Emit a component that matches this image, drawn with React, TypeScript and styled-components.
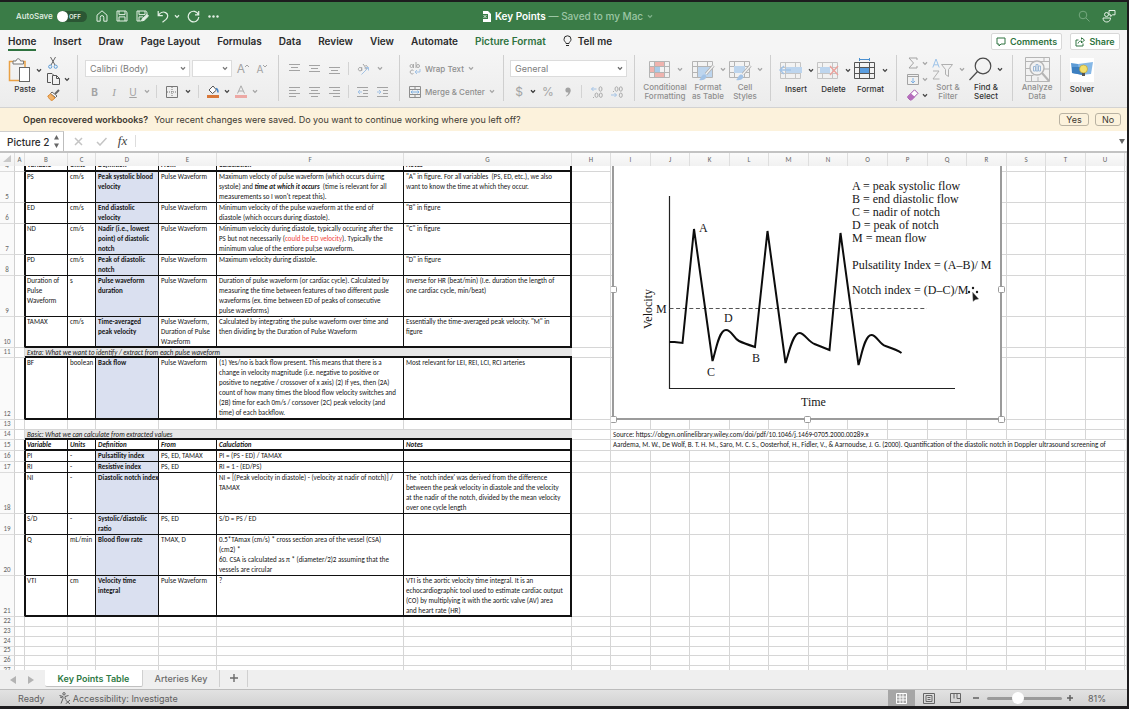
import React from "react";
import styled, { createGlobalStyle, css } from "styled-components";

const GlobalStyle = createGlobalStyle`
  * { box-sizing: border-box; }
  html, body { margin: 0; padding: 0; background: #1b1b1b; }
  button, input, select { font: inherit; color: inherit; margin: 0; padding: 0; border: 0; background: none; }
`;

const ui = `Inter, "Liberation Sans", sans-serif`;
const cellFont = `Carlito, Roboto, "Liberation Sans", sans-serif`;

const Window = styled.div`
  display: flex;
  flex-direction: column;
  height: 100vh;
  padding: 2px 2px 3px 0;
  background: #1d1c1e;
  font-family: ${ui};
  color: #2b2b2b;
  overflow: hidden;
`;

/* ---------- title bar ---------- */
const TitleBar = styled.header`
  display: grid;
  grid-template-columns: 1fr auto 1fr;
  align-items: center;
  flex: none;
  height: 28px;
  padding: 0 8px 0 16px;
  background: #3a7c47;
  color: #e3f0e5;
`;
const QuickAccess = styled.div`
  display: flex;
  align-items: center;
`;
const AutoSave = styled.label`
  display: flex;
  align-items: center;
  justify-content: space-between;
  width: 71px;
  margin-right: 4px;
  font-size: 8px;
  font-weight: 500;
  white-space: nowrap;
`;
const Toggle = styled.span`
  display: flex;
  align-items: center;
  position: relative;
  width: 30px;
  height: 11px;
  padding-left: 12px;
  border-radius: 6px;
  background: #2b5634;
  font-size: 6px;
  font-weight: 600;
  &::before {
    content: "";
    position: absolute;
    left: 0;
    top: 0;
    width: 11px;
    height: 11px;
    border-radius: 50%;
    background: #fff;
  }
  input { position: absolute; inset: 0; opacity: 0; }
`;
const IconButton = styled.button<{ $w?: number; $c?: string }>`
  display: flex;
  align-items: center;
  justify-content: center;
  flex: none;
  width: ${(p) => p.$w ?? 20}px;
  height: 16px;
  color: ${(p) => p.$c ?? "inherit"};
`;
const DocTitle = styled.div`
  display: flex;
  align-items: center;
  gap: 4px;
  font-size: 10px;
  color: #9cc6a4;
  font-weight: 500;
  white-space: nowrap;
  strong { color: #fff; font-weight: 600; }
`;
const TitleRight = styled.div`
  display: flex;
  justify-content: flex-end;
  gap: 5px;
`;

/* ---------- tabs ---------- */
const TabRow = styled.nav`
  display: flex;
  align-items: center;
  flex: none;
  height: 23px;
  padding: 0 7px 0 8px;
  background: #f5f5f5;
`;
const Tabs = styled.div`
  display: flex;
  gap: 17px;
  flex: 1;
`;
const Tab = styled.button<{ $active?: boolean; $green?: boolean }>`
  display: flex;
  align-items: center;
  gap: 6px;
  height: 19px;
  font-size: 10px;
  font-weight: 600;
  white-space: nowrap;
  color: ${(p) => (p.$green ? "#2f7340" : "#2b2b2b")};
  && { border-bottom: 2px solid ${(p) => (p.$active ? "#2f7340" : "transparent")}; }
`;
const Pill = styled.button<{ $w: number }>`
  display: flex;
  align-items: center;
  justify-content: center;
  gap: 4px;
  width: ${(p) => p.$w}px;
  height: 17px;
  margin-left: 8px;
  border: 1px solid #d8d8d8;
  border-radius: 2px;
  background: #fff;
  color: #2f7340;
  font-size: 9px;
  font-weight: 600;
`;

/* ---------- ribbon ---------- */
const Ribbon = styled.section`
  display: flex;
  flex: none;
  height: 55px;
  padding: 2px 0 6px;
  background: linear-gradient(#f5f5f5, #ececec);
  border-bottom: 1px solid #d2d2d2;
  color: #a3a3a3;
`;
const Group = styled.div<{ $w?: number; $l?: number }>`
  display: flex;
  flex: none;
  width: ${(p) => (p.$w ? p.$w + "px" : "auto")};
  padding-left: ${(p) => p.$l ?? 0}px;
  border-right: 1px solid #cfcfcf;
  &:last-child { border-right: 0; }
`;
const Stack = styled.div<{ $tight?: boolean }>`
  display: flex;
  flex-direction: column;
  gap: ${(p) => (p.$tight ? 0 : 6)}px;
  padding-top: ${(p) => (p.$tight ? 0 : 5)}px;
`;
const Line = styled.div`
  display: flex;
  align-items: center;
  height: 17px;
`;
const Sep = styled.span<{ $m: number }>`
  flex: none;
  width: 1px;
  height: 13px;
  margin: 0 ${(p) => p.$m}px;
  background: #d3d3d3;
`;
const BigButton = styled.button<{ $w: number; $on?: boolean }>`
  display: flex;
  flex-direction: column;
  align-items: center;
  flex: none;
  width: ${(p) => p.$w}px;
  color: ${(p) => (p.$on ? "#333" : "#8e8e8e")};
  font-size: 8px;
  font-weight: 500;
  line-height: 9px;
  white-space: pre;
`;
const BigIcon = styled.span`
  display: flex;
  align-items: center;
  gap: 5px;
  height: 30px;
`;
const TextButton = styled.button`
  display: flex;
  align-items: center;
  gap: 4px;
  font-size: 8px;
  font-weight: 500;
  color: #8e8e8e;
  white-space: nowrap;
`;
const SelectBox = styled.label<{ $w: number }>`
  display: flex;
  align-items: center;
  position: relative;
  width: ${(p) => p.$w}px;
  height: 17px;
  margin-right: 2px;
  border: 1px solid #dcdcdc;
  background: #fff;
  color: #7d7d7d;
  font-size: 9px;
  select { appearance: none; width: 100%; height: 100%; padding-left: 4px; outline: 0; }
  svg { position: absolute; right: 3px; }
`;
const Glyph = styled.span<{ $italic?: boolean; $under?: boolean; $size?: number; $bold?: boolean }>`
  font-size: ${(p) => p.$size ?? 11}px;
  font-weight: ${(p) => (p.$bold ? 700 : 400)};
  font-style: ${(p) => (p.$italic ? "italic" : "normal")};
  font-family: ${(p) => (p.$italic ? `"Liberation Serif", serif` : ui)};
  text-decoration: ${(p) => (p.$under ? "underline" : "none")};
`;

/* ---------- message and formula bars ---------- */
const Message = styled.section`
  display: flex;
  align-items: center;
  flex: none;
  gap: 6px;
  height: 23px;
  padding: 0 6px 0 23px;
  background: #fcf2dc;
  font-size: 9px;
  color: #3c3931;
  white-space: nowrap;
  strong { font-weight: 600; }
  p { margin: 0; flex: 1; }
`;
const Answer = styled.button<{ $w: number }>`
  width: ${(p) => p.$w}px;
  height: 13px;
  border: 1px solid #b9b2a2;
  border-radius: 3px;
  font-size: 9px;
  line-height: 11px;
`;
const FormulaBar = styled.div`
  display: flex;
  align-items: center;
  flex: none;
  height: 22px;
  background: #fff;
  border-bottom: 2px solid #c3c3c3;
`;
const NameBox = styled.div`
  display: flex;
  align-items: center;
  width: 64px;
  height: 20px;
  padding-left: 7px;
  border-right: 1px solid #bdbdbd;
  border-top: 1px solid #cfcfcf;
  color: #2b2b2b;
  input { flex: 1; min-width: 0; font-size: 10px; font-weight: 500; outline: 0; }
  svg { margin-right: 3px; }
`;
const FormulaInput = styled.input`
  flex: 1;
  min-width: 0;
  height: 12px;
  && { border-left: 1px solid #ddd; }
  outline: 0;
`;

/* ---------- sheet ---------- */
const SheetArea = styled.main`
  flex: 1;
  min-height: 0;
  overflow: hidden;
  background: #fff;
`;
const Grid = styled.table`
  table-layout: fixed;
  width: 100%;
  min-width: 1127px;
  border-collapse: separate;
  border-spacing: 0;
  font-family: ${cellFont};
  font-size: 7px;
  line-height: 10px;
  color: #161616;
  td, th { padding: 0; vertical-align: top; font-weight: 400; text-align: left; }
`;
const Col = styled.col<{ $w?: number }>`
  width: ${(p) => (p.$w ? p.$w + "px" : "auto")};
`;
const ColHead = styled.th`
  position: sticky;
  top: 0;
  z-index: 3;
  height: 13px;
  background: linear-gradient(#fbfbfb, #f1f1f1);
  border-right: 1px solid #dedede;
  color: #666;
  line-height: 13px;
  && { text-align: center; }
`;
const RowHead = styled.th<{ $h: number }>`
  height: ${(p) => p.$h}px;
  background: #fafafa;
  border-right: 1px solid #d0d0d0;
  border-bottom: 1px solid #dcdcdc;
  color: #666;
  && { vertical-align: bottom; text-align: center; }
`;
const ink = "#111";
const Cell = styled.td<{ $kind?: string; $thick?: boolean; $first?: boolean; $last?: boolean }>`
  border-right: 1px solid #d6d6d6;
  border-bottom: 1px solid #d6d6d6;
  ${(p) =>
    p.$kind &&
    css`
      border-right: ${p.$last ? 2 : 1}px solid ${ink};
      border-bottom: ${p.$thick ? 2 : 1}px solid ${ink};
      border-left: ${p.$first ? 1 : 0}px solid ${ink};
    `}
  ${(p) => p.$kind === "fill" && css`background: #dae0f0;`}
`;
const Edge = styled.td<{ $dark?: boolean }>`
  border-right: 1px solid ${(p) => (p.$dark ? ink : "#d6d6d6")};
  border-bottom: 1px solid #d6d6d6;
`;
const Band = styled.td`
  background: #e6e6e6;
  border-bottom: 2px solid ${ink};
`;
const Anchor = styled.td`
  position: relative;
`;
const Content = styled.div<{ $h: number; $bold?: boolean; $italic?: boolean; $end?: boolean; $pad?: number }>`
  display: flex;
  flex-direction: column;
  justify-content: ${(p) => (p.$end ? "flex-end" : "flex-start")};
  height: ${(p) => p.$h - 2}px;
  padding-left: ${(p) => p.$pad ?? 2}px;
  white-space: pre;
  font-weight: ${(p) => (p.$bold ? 700 : 400)};
  font-style: ${(p) => (p.$italic ? "italic" : "normal")};
`;
const Red = styled.span`
  color: #f0423a;
`;
const Picture = styled.figure`
  position: absolute;
  left: 0;
  top: 0;
  z-index: 2;
  margin: 0;
  line-height: 0;
`;

/* ---------- bottom bars ---------- */
const SheetTabs = styled.nav`
  display: flex;
  flex: none;
  height: 20px;
  background: #efefef;
  border-bottom: 1px solid #bcbcbc;
`;
const SheetNav = styled.div`
  display: flex;
  align-items: center;
  gap: 12px;
  width: 45px;
  padding-left: 10px;
`;
const SheetTab = styled.button<{ $w: number; $active?: boolean }>`
  width: ${(p) => p.$w}px;
  height: 17px;
  font-size: 9px;
  font-weight: ${(p) => (p.$active ? 600 : 500)};
  color: ${(p) => (p.$active ? "#2f7a45" : "#6b6b6b")};
  && {
    background: ${(p) => (p.$active ? "#fff" : "none")};
    border-right: 1px solid #d0d0d0;
  }
  ${(p) => p.$active && css`&& { border-bottom: 1px solid #c0c0c0; border-radius: 0 0 2px 2px; }`}
`;
const StatusBar = styled.footer`
  display: flex;
  align-items: center;
  flex: none;
  height: 16px;
  background: linear-gradient(#e2e2e2, #d2d2d2);
  padding: 0 21px 0 18px;
  font-size: 9px;
  color: #606060;
  white-space: nowrap;
`;
const StatusText = styled.span`
  display: flex;
  align-items: center;
  gap: 2px;
  margin-right: 14px;
`;
const Spacer = styled.span`
  flex: 1;
`;
const ViewButton = styled.button<{ $active?: boolean }>`
  display: flex;
  align-items: center;
  justify-content: center;
  width: 27px;
  height: 16px;
  && { background: ${(p) => (p.$active ? "#a6a6a6" : "none")}; }
  color: ${(p) => (p.$active ? "#fff" : "#666")};
`;
const ZoomSlider = styled.input`
  appearance: none;
  width: 75px;
  height: 12px;
  margin: 0 4px;
  &::-webkit-slider-runnable-track { height: 3px; border-radius: 2px; background: #9a9a9a; }
  &::-webkit-slider-thumb {
    appearance: none;
    width: 12px;
    height: 12px;
    margin-top: -5px;
    border-radius: 50%;
    background: #fff;
  }
`;
const Percent = styled.output`
  width: 32px;
  text-align: right;
`;

/* ---------- icons ---------- */
const Svg = ({ w = 14, h = 14, sw = 1, children }: { w?: number; h?: number; sw?: number; children: React.ReactNode }) => (
  <svg width={w} height={h} viewBox={`0 0 ${w} ${h}`} fill="none" stroke="currentColor" strokeWidth={sw} aria-hidden="true">
    {children}
  </svg>
);
const Chevron = ({ c = "#a5a5a5" }: { c?: string }) => (
  <svg width="6" height="5" viewBox="0 0 6 5" fill="none" stroke={c} strokeWidth="1.3" aria-hidden="true">
    <path d="M1 1.3 3 3.4 5 1.3" />
  </svg>
);
const BLUE = "#a3c3e6";
const HomeIcon = () => (<Svg w={12} h={12}><path d="M1 5.2 6 .8l5 4.4v6H7.8V7.4a1.8 1.8 0 0 0-3.6 0v3.8H1z" /></Svg>);
const SaveIcon = () => (<Svg w={12} h={12}><path d="M1 1h8.7L11 2.300V11H1zM3 1v3.600h6V1M3 11V6.900h6V11" /></Svg>);
const SavePenIcon = () => (<Svg w={13} h={12}><path d="M5 11H1V1h8.700L11 2.300V5M3 1v3.600h6V1M3 11V6.900h4" /><path d="m5.500 11 .8-2.300L11 4.500l1.500 1.500L8 10.400z" fill="currentColor" /></Svg>);
const UndoIcon = () => (<Svg w={12} h={13} sw={1.2}><path d="M1.200 1v4.600h4.600M1.500 5.300C3 2.700 6 1.300 8.600 2.600c3 1.600 2.600 4.800.4 6.800L5.500 12.300" /></Svg>);
const RedoIcon = () => (<Svg w={13} h={13} sw={1.2}><path d="M11.700 1v3.800H8M11.400 4.500A5.300 5.300 0 1 0 11.800 7" /></Svg>);
const AlignIcon = ({ rows }: { rows: number[][] }) => (
  <Svg w={12} h={12}>{rows.map(([x1, x2, y]) => (<path key={y} d={`M${x1} ${y}H${x2}`} />))}</Svg>
);
const TableIcon = ({ children, c = "#b4b4b4" }: { children?: React.ReactNode; c?: string }) => (
  <svg width="24" height="24" viewBox="0 0 24 24" fill="none" stroke={c} aria-hidden="true">
    <path d="M1.500 4.500h20v16h-20zM1.500 9.500h20M1.500 15.500h20M6.500 4.500v16M16.500 4.500v16" />
    {children}
  </svg>
);
const Brush = () => (<><path d="M22.500 8.500 15 17" stroke="#b0b0b0" strokeWidth="3" /><path d="M22.500 8.500 15 17" stroke="#f5f5f5" strokeWidth="1.200" /><path d="M8 23c2-1 2-5 5-5.500 2 0 3 2 2 3.500-1.500 2-4 2.500-7 2z" fill={BLUE} stroke="none" /></>);

/* ---------- waveform picture ---------- */
const WAVE = "M57.500 176h5l8 1L82 63l18.500 132c3-8 6-31 13.500-31 6 0 7 8 13 11 4 2 10 4 16 6l12.500-116 18 132c3-8 7-30 14-30 5 0 9 9 15 11l15 6L228.500 67l18 132c3-9 6-30 13-30 5 0 8 9 14 11 6 2 12 4 16 7";
const Waveform = () => (
  <svg width="394" height="258" viewBox="0 0 394 258" role="img" aria-label="Doppler pulse waveform">
    <rect x="2" y="-4" width="388" height="257" fill="#fff" stroke="#9b9b9b" strokeWidth="2" />
    <g transform="translate(1 0)">
      <path d="M57.500 30v192.500H343" fill="none" stroke="#222" strokeWidth="1.200" />
      <path d="M57.500 142.500H315" fill="none" stroke="#555" strokeDasharray="4 2.600" />
      <path d={WAVE} fill="none" stroke="#0c0c0c" strokeWidth="2" strokeLinejoin="miter" strokeMiterlimit="2" />
      <g fontFamily='"Liberation Serif", serif' fontSize="12" fill="#161616">
        <text x="44" y="147">M</text>
        <text x="87" y="66">A</text>
        <text x="112" y="156">D</text>
        <text x="95" y="210">C</text>
        <text x="140" y="196">B</text>
        <text x="189" y="240">Time</text>
        <text transform="translate(40 163) rotate(-90)">Velocity</text>
        <text x="240" y="24">A = peak systolic flow</text>
        <text x="240" y="37">B = end diastolic flow</text>
        <text x="240" y="50">C = nadir of notch</text>
        <text x="240" y="63">D = peak of notch</text>
        <text x="240" y="76">M = mean flow</text>
        <text x="240" y="103">Pulsatility Index = (A–B)/ M</text>
        <text x="240" y="128">Notch index = (D–C)/M</text>
      </g>
      <g fill="#1b1b1b">
        <circle cx="357" cy="126" r="1.200" /><circle cx="361" cy="122" r="1.200" /><circle cx="365" cy="126" r="1.200" />
        <path d="m360.500 126 .5 9.500 2.300-1.800 3.500-.7z" stroke="#999" strokeWidth=".4" />
      </g>
    </g>
    <g fill="#fff" stroke="#9b9b9b">
      {[[2, 123], [390, 123], [2, 253], [196, 253], [390, 253]].map(([x, y]) => (
        <rect key={`${x}-${y}`} x={x - 2.5} y={y - 2.5} width="6" height="6" rx="1" />
      ))}
    </g>
  </svg>
);

/* ---------- sheet data ---------- */
type Row = { n: number; h: number; cells?: React.ReactNode[]; head?: boolean; band?: string; thick?: boolean };
const rows: Row[] = [
  { n: 4, h: 6, head: true, thick: true, cells: ["Variable", "Units", "Definition", "From", "Caluclation", "Notes"] },
  { n: 5, h: 31, cells: ["PS", "cm/s", "Peak systolic blood\nvelocity", "Pulse Waveform", <>Maximum velocty of pulse waveform (which occurs duirng{"\n"}systole) and <b><i>time at which it occurs</i></b>{"  (time is relevant for all\nmeasurements so I won't repeat this)."}</>, "\"A\" in figure. For all variables  (PS, ED, etc.), we also\nwant to know the time at which they occur."] },
  { n: 6, h: 21, cells: ["ED", "cm/s", "End diastolic\nvelocity", "Pulse Waveform", "Minimum velocity of the pulse waveform at the end of\ndiastole (which occurs during diastole).", "\"B\" in figure"] },
  { n: 7, h: 31, cells: ["ND", "cm/s", "Nadir (i.e., lowest\npoint) of diastolic\nnotch", "Pulse Waveform", <>{"Minimum velocity during diastole, typically occuring after the\nPS but not necessarily ("}<Red>could be ED velocity</Red>{"). Typically the\nminimum value of the entiore pul;se waveform."}</>, "\"C\" in figure"] },
  { n: 8, h: 21, cells: ["PD", "cm/s", "Peak of diastolic\nnotch", "Pulse Waveform", "Maximum velocity during diastole.", "\"D\" in figure"] },
  { n: 9, h: 41, cells: ["Duration of\nPulse\nWaveform", "s", "Pulse waveform\nduration", "Pulse Waveform", "Duration of pulse waveform (or cardiac cycle). Calculated by\nmeasuring the time between features of two different pusle\nwaveforms (ex. time between ED of peaks of consecutive\npulse waveforms)", "Inverse for HR (beat/min) (I.e. duration the length of\none cardiac cycle, min/beat)"] },
  { n: 10, h: 31, thick: true, cells: ["TAMAX", "cm/s", "Time-averaged\npeak velocity", "Pulse Waveform,\nDuration of Pulse\nWaveform", "Calculated by integrating the pulse waveform over time and\nthen dividing by the Duration of Pulse Waveform", "Essentially the time-averaged peak velocity. \"M\" in\nfigure"] },
  { n: 11, h: 10, band: "Extra: What we want to identify / extract from each pulse waveform" },
  { n: 12, h: 62, thick: true, cells: ["BF", "boolean", "Back flow", "Pulse Waveform", "(1) Yes/no is back flow present. This means that there is a\nchange in velocity magnitude (i.e. negative to positive or\npositive to negative / crossover of x axis) (2) If yes, then (2A)\ncount of how many times the blood flow velocity switches and\n(2B) time for each 0m/s / corssover (2C) peak velocity (and\ntime) of each backflow.", "Most relevant for LEI, REI, LCI, RCI arteries"] },
  { n: 13, h: 10 },
  { n: 14, h: 10, band: "Basic: What we can calculate from extracted values" },
  { n: 15, h: 11, head: true, thick: true, cells: ["Variable", "Units", "Definition", "From", "Caluclation", "Notes"] },
  { n: 16, h: 11, cells: ["PI", "-", "Pulsatility index", "PS, ED, TAMAX", "PI = (PS - ED) / TAMAX", ""] },
  { n: 17, h: 11, cells: ["RI", "-", "Resistive index", "PS, ED", "RI = 1 - (ED/PS)", ""] },
  { n: 18, h: 41, cells: ["NI", "-", "Diastolic notch index", "", "NI = [(Peak velocity in diastole) - (velocity at nadir of notch)] /\nTAMAX", "The `notch index' was derived from the difference\nbetween the peak velocity in diastole and the velocity\nat the nadir of the notch, divided by the mean velocity\nover one cycle length"] },
  { n: 19, h: 21, cells: ["S/D", "-", "Systolic/diastolic\nratio", "PS, ED", "S/D = PS / ED", ""] },
  { n: 20, h: 41, cells: ["Q", "mL/min", "Blood flow rate", "TMAX, D", "0.5*TAmax (cm/s) * cross section area of the vessel (CSA)\n(cm2) *\n60. CSA is calculated as π * (diameter/2)2 assuming that the\nvessels are circular", ""] },
  { n: 21, h: 41, thick: true, cells: ["VTI", "cm", "Velocity time\nintegral", "Pulse Waveform", "?", "VTI is the aortic velocity time integral. It is an\nechocardiographic tool used to estimate cardiac output\n(CO) by multiplying it with the aortic valve (AV) area\nand heart rate (HR)"] },
  { n: 22, h: 10 }, { n: 23, h: 10 }, { n: 24, h: 10 }, { n: 25, h: 9 }, { n: 26, h: 10 }, { n: 27, h: 10 },
];
const COLS = [15, 10, 43, 28, 63, 58, 187, 168, 39, 40, 39, 40, 39, 40, 39, 40, 40, 39, 40, 39, 40, 39];
const LETTERS = "ABCDEFGHIJKLMNOPQRSTU".split("");
const SOURCE = "Source: https://obgyn.onlinelibrary.wiley.com/doi/pdf/10.1046/j.1469-0705.2000.00289.x";
const CITATION = "Aardema, M. W., De Wolf, B. T. H. M., Saro, M. C. S., Oosterhof, H., Fidler, V., & Aarnoudse, J. G. (2000). Quantification of the diastolic notch in Doppler ultrasound screening of";

const blanks = (from: number, count: number) => Array.from({ length: count }, (_, i) => <Cell key={`b${from + i}`} />);

const SheetRow = ({ r }: { r: Row }) => (
  <tr>
    <RowHead scope="row" $h={r.h}><Content $h={r.h} $end $pad={0}>{r.n}</Content></RowHead>
    <Edge $dark={!!r.cells} />
    {r.cells?.map((c, i) => (
      <Cell key={i} $kind={i === 2 && !r.head ? "fill" : "box"} $thick={r.thick} $first={i === 0} $last={i === 5}>
        <Content $h={r.h} $bold={r.head || i === 2} $italic={r.head} $end={r.n === 4} $pad={i === 0 ? 1 : 2}>
          <span>{c}</span>
        </Content>
      </Cell>
    ))}
    {r.band && <Band colSpan={6}><Content $h={r.h} $italic>{r.band}</Content></Band>}
    {!r.cells && !r.band && blanks(0, 6)}
    <Cell />
    {r.n === 4 && <><Anchor><Picture><Waveform /></Picture></Anchor>{blanks(7, 13)}</>}
    {r.n === 14 && <><Cell colSpan={7}><Content $h={r.h}>{SOURCE}</Content></Cell>{blanks(14, 7)}</>}
    {r.n === 15 && <Cell colSpan={14}><Content $h={r.h}>{CITATION}</Content></Cell>}
    {![4, 14, 15].includes(r.n) && blanks(7, 14)}
  </tr>
);

export default function App() {
  const dark = "#444";
  return (
    <Window>
      <GlobalStyle />
      <TitleBar>
        <QuickAccess>
          <AutoSave>AutoSave<Toggle><input type="checkbox" aria-label="AutoSave" />OFF</Toggle></AutoSave>
          <IconButton $w={21} aria-label="Home"><HomeIcon /></IconButton>
          <IconButton aria-label="Save"><SaveIcon /></IconButton>
          <IconButton $w={21} aria-label="Save as"><SavePenIcon /></IconButton>
          <IconButton $w={20} aria-label="Undo"><UndoIcon /></IconButton>
          <IconButton $w={8} aria-label="Undo list"><Chevron c="#e3f0e5" /></IconButton>
          <IconButton $w={24} aria-label="Repeat"><RedoIcon /></IconButton>
          <IconButton $w={16} aria-label="More">
            <svg width="11" height="3" viewBox="0 0 11 3" fill="currentColor"><circle cx="1.500" cy="1.500" r="1.200" /><circle cx="5.500" cy="1.500" r="1.200" /><circle cx="9.500" cy="1.500" r="1.200" /></svg>
          </IconButton>
        </QuickAccess>
        <DocTitle>
          <svg width="9" height="11" viewBox="0 0 9 11" aria-hidden="true"><path d="M1 0h5l3 3v8H1z" fill="#fff" /><rect y="3" width="6" height="5" fill="#3a7c47" /><path d="m1.500 4 3 3m0-3-3 3M6.500 5H8M6.500 7H8" stroke="#dcebdf" /></svg>
          <span><strong>Key Points</strong> — Saved to my Mac</span>
          <Chevron c="#7fb18a" />
        </DocTitle>
        <TitleRight>
          <IconButton aria-label="Search" $c="#75a87f"><Svg w={12} h={12}><circle cx="5" cy="5" r="3.800" /><path d="m8 8 3.500 3.500" /></Svg></IconButton>
          <IconButton aria-label="Collaborate"><Svg w={14} h={14}><circle cx="4.500" cy="5.500" r="2" /><path d="M1 9h7.500c0 2.500-1.500 4-3.700 4S1 11.500 1 9zM7 1.500h6v4.300h-2.500L8.700 7.500V5.800H7z" /></Svg></IconButton>
        </TitleRight>
      </TitleBar>

      <TabRow>
        <Tabs>
          {["Home", "Insert", "Draw", "Page Layout", "Formulas", "Data", "Review", "View", "Automate", "Picture Format"].map((t) => (
            <Tab key={t} $active={t === "Home"} $green={t === "Picture Format"}>{t}</Tab>
          ))}
          <Tab><Svg w={9} h={12}><path d="M3 8.500C3 7 1 6.500 1 4.300a3.500 3.500 0 0 1 7 0C8 6.500 6 7 6 8.500zM3 10.500h3" /></Svg>Tell me</Tab>
        </Tabs>
        <Pill $w={71}><Svg w={10} h={10}><path d="M1 1h8v6H5L3 9V7H1z" /></Svg>Comments</Pill>
        <Pill $w={50}><Svg w={10} h={10}><path d="M3.500 3H1v6h7V6.500M3 6.500C3.500 4.500 5 4 6.500 4V6L9.500 3 6.500.800v1.700" /></Svg>Share</Pill>
      </TabRow>

      <Ribbon>
        <Group $w={78} $l={8}>
          <BigButton $w={34} $on>
            <BigIcon>
              <svg width="23" height="25" viewBox="0 0 23 25" fill="none" aria-hidden="true"><path d="M6 3.500H1.500v19H11M14 3.500h3V9" stroke="#e9a145" strokeWidth="1.500" /><path d="M5 6V3h3c.5-3 4-3 4.500 0h3v3z" stroke="#777" fill="#fafafa" /><rect x="11.500" y="9.500" width="10" height="14" fill="#fff" stroke="#666" /></svg>
              <Chevron c={dark} />
            </BigIcon>
            Paste
          </BigButton>
          <Stack $tight>
            <Line><IconButton $w={22} aria-label="Cut"><svg width="10" height="12" viewBox="0 0 10 12" fill="none"><path d="M2.500 0 7 8M7.500 0 3 8" stroke="#666" /><circle cx="2.200" cy="9.700" r="1.600" stroke="#5b9bd5" /><circle cx="7.700" cy="9.700" r="1.600" stroke="#5b9bd5" /></svg></IconButton></Line>
            <Line><IconButton $w={22} aria-label="Copy" $c="#555"><Svg w={13} h={12}><path d="M4 9.500H.5v-9H5L6.500 2M5.500 2.500h4l3 3v6h-7zM9.500 2.500v3h3" /></Svg></IconButton><Chevron c={dark} /></Line>
            <Line><IconButton $w={22} aria-label="Format painter"><svg width="13" height="12" viewBox="0 0 13 12" fill="none"><path d="m12 1-4 4" stroke="#666" strokeWidth="2" /><path d="m5 3 5 4-1.500 1.500-5-4z" fill="#fff" stroke="#666" /><path d="m3.500 5 4.500 4-3 2.500C3 11 1.500 9 .8 7z" fill="#f2b36a" stroke="#d98a35" /></svg></IconButton></Line>
          </Stack>
        </Group>

        <Group $w={201} $l={7}>
          <Stack>
            <Line>
              <SelectBox $w={105}><select aria-label="Font"><option>Calibri (Body)</option></select><Chevron c="#777" /></SelectBox>
              <SelectBox $w={40}><select aria-label="Font size"><option></option></select><Chevron c="#777" /></SelectBox>
              <IconButton $w={18} aria-label="Grow font"><Glyph $size={12}>A</Glyph><Svg w={4} h={9}><path d="m0 3 2-2 2 2" /></Svg></IconButton>
              <IconButton $w={20} aria-label="Shrink font"><Glyph $size={10}>A</Glyph><Svg w={4} h={9}><path d="m0 1 2 2 2-2" /></Svg></IconButton>
            </Line>
            <Line>
              <IconButton $w={19} aria-label="Bold"><Glyph $size={10} $bold>B</Glyph></IconButton>
              <IconButton $w={20} aria-label="Italic"><Glyph $italic>I</Glyph></IconButton>
              <IconButton $w={18} aria-label="Underline"><Glyph $size={10} $under>U</Glyph></IconButton>
              <IconButton $w={9} aria-label="Underline style"><Chevron /></IconButton>
              <Sep $m={5} />
              <IconButton $w={20} aria-label="Borders" $c="#777"><Svg w={12} h={12}><path d="M.5.5h11v11H.5z" /><path d="M6 1v10M1 6h10" strokeDasharray="1 1" /></Svg></IconButton>
              <IconButton $w={12} aria-label="Border style"><Chevron c={dark} /></IconButton>
              <Sep $m={4} />
              <IconButton $w={20} aria-label="Fill colour"><svg width="13" height="13" viewBox="0 0 13 13" fill="none"><path d="M6 1 2 5l3.500 3.500L9.500 5 6 1z" stroke="#555" fill="#fff" /><path d="M9 3.500c2 .5 2 2 2 4" stroke="#4a86c8" strokeWidth="1.500" /><path d="M0 10h12v3H0z" fill="#d9783a" /></svg></IconButton>
              <IconButton $w={8} aria-label="Fill palette"><Chevron c={dark} /></IconButton>
              <IconButton $w={20} aria-label="Font colour"><svg width="12" height="13" viewBox="0 0 12 13" fill="none"><path d="M2.500 8.500 6 .8l3.500 7.700M4 6h4" stroke="#aaa" /><path d="M0 10h12v3H0z" fill="#eda8a4" /></svg></IconButton>
              <IconButton $w={8} aria-label="Font palette"><Chevron /></IconButton>
            </Line>
          </Stack>
        </Group>

        <Group $w={121} $l={6}>
          <Stack>
            <Line>
              <IconButton aria-label="Align top"><AlignIcon rows={[[0, 11, 1.5], [2, 9, 4.5], [0, 11, 7.500]]} /></IconButton>
              <IconButton aria-label="Align middle"><AlignIcon rows={[[0, 11, 2.5], [2, 9, 5.5], [0, 11, 8.500]]} /></IconButton>
              <IconButton aria-label="Align bottom"><AlignIcon rows={[[0, 11, 4.5], [2, 9, 7.5], [0, 11, 10.500]]} /></IconButton>
              <Sep $m={3} />
              <IconButton $w={22} aria-label="Orientation"><Svg w={13} h={12}><path d="M3 4.500a1.700 1.700 0 1 0 .1 0M4.700 4v4M6 1l3 4M8.500 2.500a1.600 1.600 0 1 1-1 2.500" /><path d="m4.500 11.500 7-7M8.500 4.500h3v3" stroke={BLUE} /></Svg></IconButton>
              <IconButton $w={12} aria-label="Orientation list"><Chevron /></IconButton>
            </Line>
            <Line>
              <IconButton aria-label="Align left"><AlignIcon rows={[[0, 11, 1.5], [0, 7, 4.5], [0, 11, 7.500], [0, 7, 10.5]]} /></IconButton>
              <IconButton aria-label="Centre"><AlignIcon rows={[[0, 11, 1.5], [2, 9, 4.5], [0, 11, 7.500], [2, 9, 10.5]]} /></IconButton>
              <IconButton aria-label="Align right"><AlignIcon rows={[[0, 11, 1.5], [4, 11, 4.5], [0, 11, 7.500], [4, 11, 10.5]]} /></IconButton>
              <Sep $m={3} />
              <IconButton $w={21} aria-label="Decrease indent"><Svg w={12} h={12}><path d="M0 1.500h11M6 4.500h5M6 7.500h5M0 10.500h11" /><path d="M5 6H1M3 4 1 6l2 2" stroke={BLUE} /></Svg></IconButton>
              <IconButton aria-label="Increase indent"><Svg w={12} h={12}><path d="M0 1.500h11M6 4.500h5M6 7.500h5M0 10.500h11" /><path d="M0 6h4M2 4l2 2-2 2" stroke={BLUE} /></Svg></IconButton>
            </Line>
          </Stack>
        </Group>

        <Group $w={104} $l={9}>
          <Stack>
            <Line><TextButton><svg width="12" height="13" viewBox="0 0 12 13" fill="none" stroke="#aaa"><circle cx="2.500" cy="4" r="1.500" /><path d="M4.500 2v4M7 0v6M4.500 8.500a2 2 0 1 0 0 3" /><circle cx="9" cy="4" r="1.500" /><path d="M11 7v3H6.500M8 8l-2 2 2 2" stroke={BLUE} /></svg>Wrap Text<Chevron /></TextButton></Line>
            <Line><TextButton><Svg w={12} h={12}><path d="M.5.5h11v11H.5zM.5 3.500h11M.5 8.500h11M6 .5v3M6 8.500v3" /><path d="M2 6h8M3.500 4.500 2 6l1.500 1.500M8.500 4.500 10 6 8.500 7.500" stroke="#7fb0e2" /></Svg>Merge &amp; Center<Chevron /></TextButton></Line>
          </Stack>
        </Group>

        <Group $w={131} $l={6}>
          <Stack>
            <Line><SelectBox $w={117}><select aria-label="Number format"><option>General</option></select><Chevron c="#666" /></SelectBox></Line>
            <Line>
              <IconButton $w={18} aria-label="Currency"><Glyph $size={12}>$</Glyph></IconButton>
              <IconButton $w={9} aria-label="Currency list"><Chevron c="#333" /></IconButton>
              <IconButton $w={22} aria-label="Percent"><Glyph $size={12}>%</Glyph></IconButton>
              <IconButton $w={17} aria-label="Comma style"><svg width="6" height="10" viewBox="0 0 6 10" fill="currentColor"><circle cx="3" cy="3" r="2.600" /><path d="M5.600 3C5.600 6 4 8.500 1.200 9.600L.8 9C2.600 8 3.500 6.500 3.500 5z" /></svg></IconButton>
              <Sep $m={5} />
              <IconButton $w={20} aria-label="Increase decimal"><svg width="12" height="12" viewBox="0 0 12 12" fill="none" stroke="#aaa"><path d="M5.500 3H.5M2.500 1l-2 2 2 2" stroke={BLUE} /><ellipse cx="9.500" cy="3" rx="1.500" ry="2.200" /><ellipse cx="5.500" cy="9.200" rx="1.500" ry="2.200" /><ellipse cx="9.800" cy="9.200" rx="1.500" ry="2.200" /><path d="M2 11.500h1" /></svg></IconButton>
              <IconButton $w={20} aria-label="Decrease decimal"><svg width="12" height="12" viewBox="0 0 12 12" fill="none" stroke="#aaa"><path d="M0 9h5.500M3.500 7l2 2-2 2" stroke={BLUE} /><ellipse cx="5.500" cy="3" rx="1.500" ry="2.200" /><ellipse cx="9.800" cy="3" rx="1.500" ry="2.200" /><ellipse cx="9.800" cy="9.200" rx="1.500" ry="2.200" /><path d="M2 5.500h1" /></svg></IconButton>
            </Line>
          </Stack>
        </Group>

        <Group $w={136} $l={7}>
          <BigButton $w={46}><BigIcon><TableIcon><path d="M7 5h9v4H7zM2 10h4v5H2zM7 16h9v4H7z" fill="#efb3ae" stroke="none" /><path d="M7 10h5v5H7z" fill="#a9cbe9" stroke="none" /></TableIcon><Chevron /></BigIcon>{"Conditional\nFormatting"}</BigButton>
          <BigButton $w={40}><BigIcon><TableIcon><path d="M7 10h14v10H7z" fill="#bdd5ee" stroke="none" /><Brush /></TableIcon><Chevron /></BigIcon>{"Format\nas Table"}</BigButton>
          <BigButton $w={34}><BigIcon><TableIcon><path d="M6 9h11v7H6z" fill="#bdd5ee" stroke="none" /><Brush /></TableIcon><Chevron /></BigIcon>{"Cell\nStyles"}</BigButton>
        </Group>

        <Group $w={126} $l={6}>
          <BigButton $w={38} $on><BigIcon><TableIcon c="#c4c4c4"><path d="M7 9h16v6H7z" fill="#bdd5ee" stroke="none" /><path d="M12 12H1M5 8l-4 4 4 4" stroke={BLUE} strokeWidth="1.500" /></TableIcon><Chevron c={dark} /></BigIcon>Insert</BigButton>
          <BigButton $w={37} $on><BigIcon><TableIcon c="#c4c4c4"><path d="M4 9h10v6H4z" fill="#bdd5ee" stroke="none" /><path d="m14 8 8 9m0-9-8 9" stroke="#eda19b" strokeWidth="1.300" /></TableIcon><Chevron c={dark} /></BigIcon>Delete</BigButton>
          <BigButton $w={37} $on><BigIcon><TableIcon c="#555"><path d="M7 10h9v5H7z" fill="#5b9ee0" stroke="none" /><path d="M6 1.500h11M6.500 0v3M16.500 0v3" stroke="#4a90d0" /></TableIcon><Chevron c={dark} /></BigIcon>Format</BigButton>
        </Group>

        <Group $w={116} $l={7}>
          <Stack $tight>
            <Line><IconButton $w={18} aria-label="Sum"><Svg w={10} h={12}><path d="M9 3V1H1l4.500 5L1 11h8V9" /></Svg></IconButton><Chevron /></Line>
            <Line><IconButton $w={18} aria-label="Fill"><Svg w={12} h={11}><path d="M.5.5h11v10H.5zM.5 2.500h11" /><path d="M6 4v5M4 7l2 2 2-2" stroke="#7fb0e2" /></Svg></IconButton><Chevron /></Line>
            <Line><IconButton $w={18} aria-label="Clear"><svg width="12" height="12" viewBox="0 0 12 12"><path d="M7.500.8 11 4.300 4.500 11H3L.8 8.700V7.500z" fill="#fff" stroke="#a052a8" /><path d="m4 4.500 4 3.500-3.500 3H3L.8 8.700V7.500z" fill="#b56cbc" /></svg></IconButton><Chevron c={dark} /></Line>
          </Stack>
          <BigButton $w={40}>
            <BigIcon>
              <svg width="22" height="22" viewBox="0 0 22 22" fill="none" stroke="#b0b0b0"><path d="M.8 9.500 4 1l3.200 8.500M2 6.800h4" stroke="#9dc3e8" /><path d="M1 13h6l-6 8h6.500M9.500 6.500h11l-4 5v7l-3-2v-5z" /></svg>
              <Chevron />
            </BigIcon>
            {"Sort &\nFilter"}
          </BigButton>
          <BigButton $w={36} $on>
            <BigIcon><svg width="23" height="24" viewBox="0 0 23 24" fill="none" stroke="#4a4a4a" strokeWidth="1.200"><circle cx="14" cy="9" r="7.800" /><path d="m8.500 14.500-8 8.500" /></svg><Chevron c={dark} /></BigIcon>
            {"Find &\nSelect"}
          </BigButton>
        </Group>

        <Group $w={48} $l={4}>
          <BigButton $w={40}>
            <BigIcon><svg width="25" height="25" viewBox="0 0 25 25" fill="none" stroke="#b5b5b5"><path d="M.5.5h24v24H.5zM.5 4.500h24M.5 11.500h5M.5 18.500h8M6.500 18v6M13 20v4M19 12h5M19 5V1" /><circle cx="12" cy="11" r="7" fill="#f2f2f2" strokeWidth="1.400" /><path d="m17 16 7 8" strokeWidth="2" /><path d="M8.500 14V9.500h2V14zM11 14V7.500h2V14zM13.500 14v-5h2v5z" stroke="#9cb8d6" /></svg></BigIcon>
            {"Analyze\nData"}
          </BigButton>
        </Group>

        <Group $w={44} $l={1}>
          <BigButton $w={40} $on>
            <BigIcon><svg width="24" height="24" viewBox="0 0 24 24"><path fill="#fff" d="M0 0h24v24H0z" /><path d="m1 5 14 2-2 10-11-2z" fill="#5d9cd6" /><path d="m8 6 15-2-2 12-11 1z" fill="#86b8e6" /><path d="m2 9 12 0-1 8-11-2z" fill="#3c7fc0" /><circle cx="13.500" cy="11" r="4" fill="#f3df6b" stroke="#b59a2e" strokeWidth=".6" /><path d="M12 15h3v3h-3z" fill="#555" /></svg></BigIcon>
            Solver
          </BigButton>
        </Group>
      </Ribbon>

      <Message>
        <strong>Open recovered workbooks?</strong>
        <p>Your recent changes were saved. Do you want to continue working where you left off?</p>
        <Answer $w={30}>Yes</Answer>
        <Answer $w={26}>No</Answer>
      </Message>

      <FormulaBar>
        <NameBox>
          <input aria-label="Name box" defaultValue="Picture 2" />
          <svg width="7" height="13" viewBox="0 0 7 13" fill="#666"><path d="M3.500 0 6 4.500H1zM3.500 13 6 8.500H1z" /></svg>
        </NameBox>
        <IconButton $w={28} aria-label="Cancel" $c="#c4c4c4"><Svg w={9} h={9} sw={1.5}><path d="m1 1 7 7m0-7L1 8" /></Svg></IconButton>
        <IconButton $w={18} aria-label="Enter" $c="#c4c4c4"><Svg w={11} h={9} sw={1.5}><path d="m1 5 3 3 6.500-7" /></Svg></IconButton>
        <IconButton $w={25} aria-label="Insert function" $c="#444"><Glyph $italic $size={13}>fx</Glyph></IconButton>
        <FormulaInput aria-label="Formula" />
        <IconButton $w={11} aria-label="Expand formula bar"><svg width="6" height="5" viewBox="0 0 6 5" fill="#666"><path d="M0 0h6L3 5z" /></svg></IconButton>
      </FormulaBar>

      <SheetArea>
        <Grid>
          <colgroup>{COLS.map((w, i) => (<Col key={i} $w={w} />))}<Col /></colgroup>
          <thead>
            <tr>
              <ColHead aria-label="Select all"><svg width="8" height="7" viewBox="0 0 8 7" fill="#c9c9c9"><path d="M8 0v7H0z" /></svg></ColHead>
              {LETTERS.map((l) => (<ColHead key={l} scope="col">{l}</ColHead>))}
              <ColHead />
            </tr>
          </thead>
          <tbody>{rows.map((r) => (<SheetRow key={r.n} r={r} />))}</tbody>
        </Grid>
      </SheetArea>

      <SheetTabs>
        <SheetNav>
          <IconButton $w={6} aria-label="Previous sheet"><svg width="6" height="8" viewBox="0 0 6 8" fill="#b3b3b3"><path d="M6 0v8L0 4z" /></svg></IconButton>
          <IconButton $w={6} aria-label="Next sheet"><svg width="6" height="8" viewBox="0 0 6 8" fill="#b3b3b3"><path d="M0 0v8l6-4z" /></svg></IconButton>
        </SheetNav>
        <SheetTab $w={98} $active>Key Points Table</SheetTab>
        <SheetTab $w={77}>Arteries Key</SheetTab>
        <SheetTab $w={28} aria-label="Add sheet"><Svg w={8} h={8} sw={1.4}><path d="M4 0v8M0 4h8" /></Svg></SheetTab>
      </SheetTabs>

      <StatusBar>
        <StatusText>Ready</StatusText>
        <StatusText>
          <Svg w={12} h={12}><circle cx="5" cy="1.800" r="1.200" /><path d="M.5 3.500 4 4.500v2l-2 5M9.500 3.500 6 4.500v2M1 5l2 .8M6 6l1 1.500M6.500 8l4.500 4M11 8l-4.500 4" /></Svg>
          Accessibility: Investigate
        </StatusText>
        <Spacer />
        <ViewButton $active aria-label="Normal view"><Svg w={11} h={11}><path d="M.5.5h10v10H.5zM.5 4h10M.5 7h10M4 .5v10M7 .5v10" /></Svg></ViewButton>
        <ViewButton aria-label="Page layout view"><Svg w={12} h={11}><path d="M.5.5h11v10H.5zM3 2.500h6v6H3zM4.500 4.500h3M4.500 6.500h3" /></Svg></ViewButton>
        <ViewButton aria-label="Page break view"><Svg w={11} h={10}><path d="M.5.5h10v9H.5zM4 .5v5M7 .5v5h3.500" /></Svg></ViewButton>
        <IconButton $w={14} aria-label="Zoom out"><Svg w={6} h={6} sw={1.5}><path d="M0 3h6" /></Svg></IconButton>
        <ZoomSlider type="range" aria-label="Zoom" min={0} max={100} defaultValue={40} />
        <IconButton $w={8} aria-label="Zoom in"><Svg w={6} h={6} sw={1.5}><path d="M0 3h6M3 0v6" /></Svg></IconButton>
        <Percent>81%</Percent>
      </StatusBar>
    </Window>
  );
}
